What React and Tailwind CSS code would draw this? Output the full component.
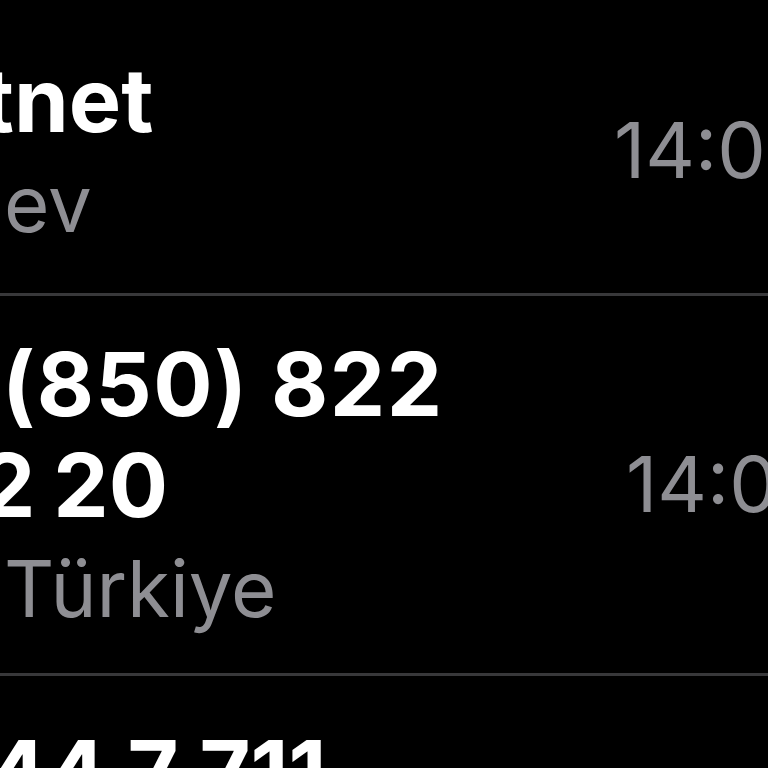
const rows = [
  {
    pad: "pt-[50px] pb-[44px]",
    lines: [{ text: "Ttnet", cls: "-ml-[68px]" }],
    sub: "ev",
    time: "14:05",
    timeCls: "ml-[14px]",
  },
  {
    pad: "pt-[38px] pb-[39px]",
    lines: [
      { text: "(850) 822", cls: "ml-[2px] tracking-[1.5px]" },
      { text: "2 20", cls: "-ml-[20px] [word-spacing:-3px]" },
    ],
    sub: "Türkiye",
    time: "14:01",
    timeCls: "ml-[26px]",
  },
  {
    pad: "pt-[46px] pb-[40px]",
    lines: [{ text: "444 7 711", cls: "-ml-[72px]" }],
    sub: "Türkiye",
    time: "13:58",
    timeCls: "ml-[26px]",
  },
];

function CallRow({ pad, lines, sub, time, timeCls }) {
  return (
    <div className={`flex items-center border-b-[3px] border-[#38383a] ${pad}`}>
      <div className="w-[600px] shrink-0 flex flex-col gap-[8px]">
        <div className="text-[88px] leading-[101px] font-bold text-white whitespace-nowrap">
          {lines.map((l) => (
            <div key={l.text} className={l.cls}>
              {l.text}
            </div>
          ))}
        </div>
        <div className="text-[78px] leading-[90px] text-[#8e8e93] pl-[4px] whitespace-nowrap">
          {sub}
        </div>
      </div>
      <div className={`shrink-0 text-[77px] leading-[90px] text-[#8e8e93] whitespace-nowrap ${timeCls}`}>
        {time}
      </div>
    </div>
  );
}

export default function App() {
  return (
    <div className="w-[768px] h-[768px] overflow-hidden bg-black font-['Inter',sans-serif]">
      {rows.map((r, i) => (
        <CallRow key={i} {...r} />
      ))}
    </div>
  );
}
